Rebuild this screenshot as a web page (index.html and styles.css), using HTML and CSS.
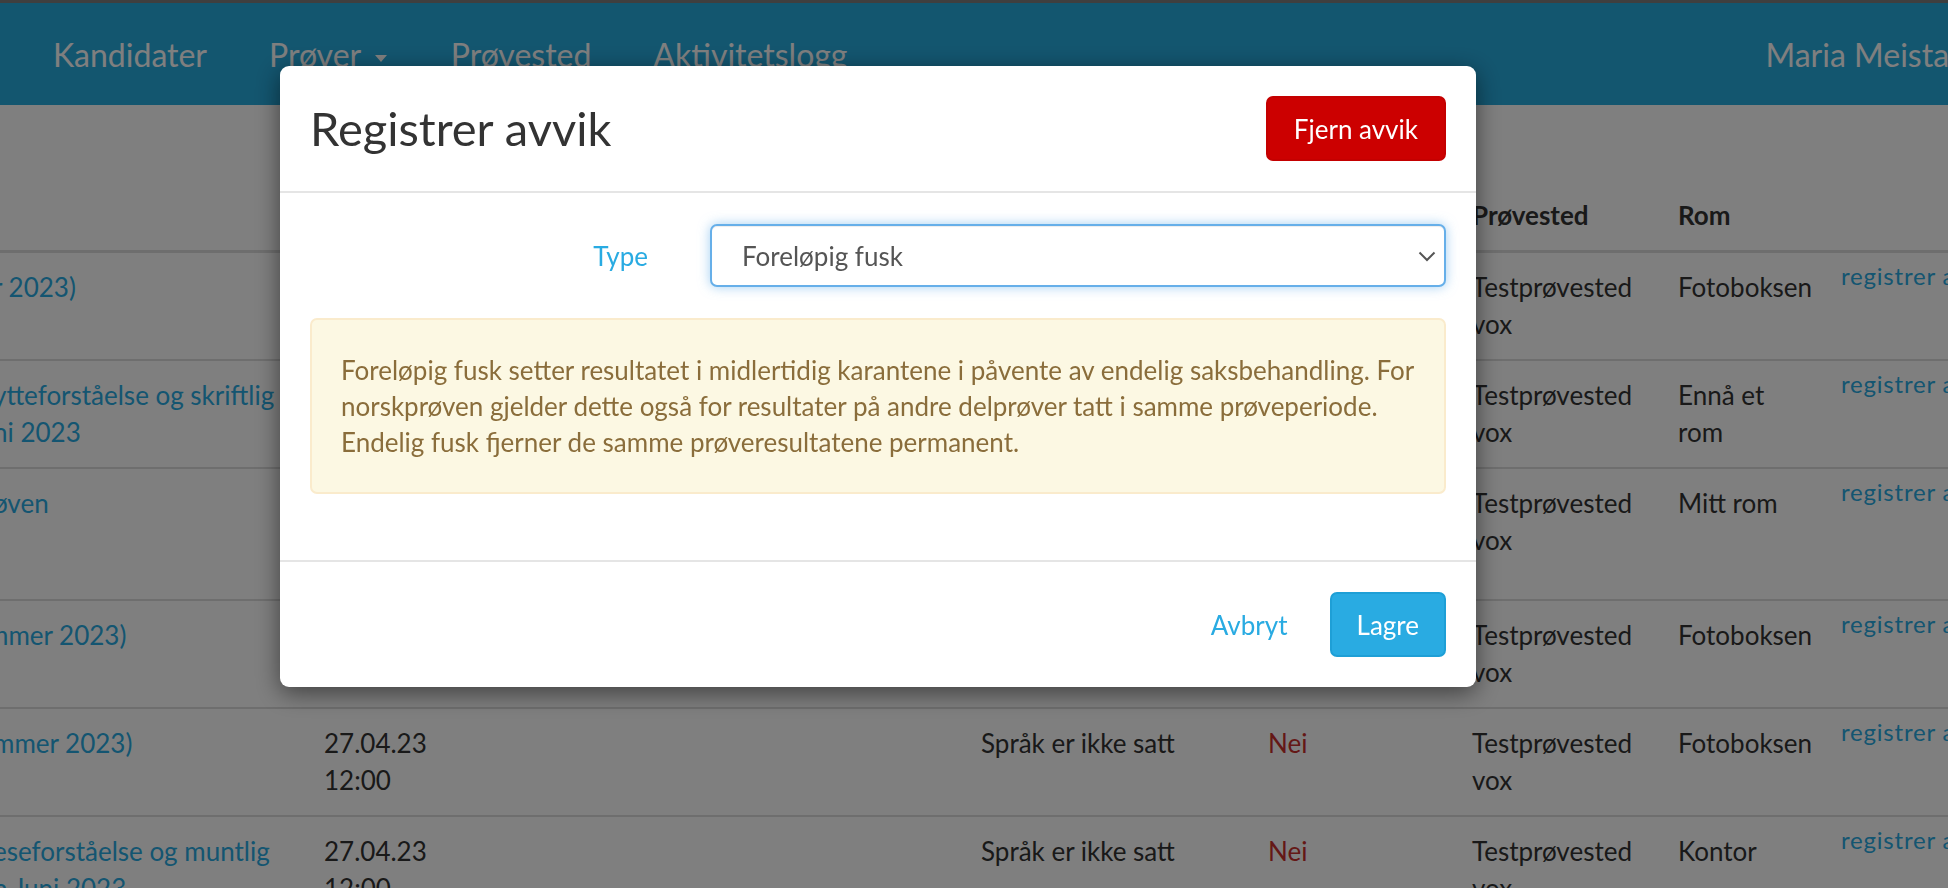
FILE: index.html
```html
<!DOCTYPE html>
<html lang="no">
<head>
  <meta charset="UTF-8">
  <meta name="viewport" content="width=device-width, initial-scale=1.0">
  <title>Registrer avvik</title>
  <link rel="stylesheet" href="styles.css">
</head>
<body>
  <div class="topstripe"></div>
  <nav class="navbar">
    <ul class="navbar-nav">
      <li><a href="#">Kandidater</a></li>
      <li><a href="#">Prøver <span class="caret"></span></a></li>
      <li><a href="#">Prøvested</a></li>
      <li><a href="#">Aktivitetslogg</a></li>
    </ul>
    <div class="navbar-user">Maria Meistad</div>
  </nav>

  <div class="content">
    <table class="oversikt">
      <colgroup>
        <col class="c-prove">
        <col class="c-tid">
        <col class="c-sprak">
        <col class="c-mott">
        <col class="c-sted">
        <col class="c-rom">
        <col class="c-handling">
      </colgroup>
      <thead>
        <tr>
          <th></th>
          <th>Tidspunkt</th>
          <th>Språk</th>
          <th>Møtt</th>
          <th>Prøvested</th>
          <th>Rom</th>
          <th></th>
        </tr>
      </thead>
      <tbody>
        <tr>
          <td><a href="#">r 2023)</a></td>
          <td>27.04.23<br>12:00</td>
          <td>Språk er ikke satt</td>
          <td class="nei">Nei</td>
          <td>Testprøvested<br>vox</td>
          <td>Fotoboksen</td>
          <td class="handling"><a href="#">registrer avvik</a></td>
        </tr>
        <tr>
          <td><a href="#">ytteforståelse og skriftlig<br>ni 2023</a></td>
          <td>27.04.23<br>12:00</td>
          <td>Språk er ikke satt</td>
          <td class="nei">Nei</td>
          <td>Testprøvested<br>vox</td>
          <td>Ennå et<br>rom</td>
          <td class="handling"><a href="#">registrer avvik</a></td>
        </tr>
        <tr>
          <td><a href="#">øven</a></td>
          <td><div class="tid-lang">27.04.23<br>12:00</div></td>
          <td>Språk er ikke satt</td>
          <td class="nei">Nei</td>
          <td>Testprøvested<br>vox</td>
          <td>Mitt rom</td>
          <td class="handling"><a href="#">registrer avvik</a></td>
        </tr>
        <tr>
          <td class="forskjov"><a href="#">mmer 2023)</a></td>
          <td>27.04.23<br>12:00</td>
          <td>Språk er ikke satt</td>
          <td class="nei">Nei</td>
          <td>Testprøvested<br>vox</td>
          <td>Fotoboksen</td>
          <td class="handling"><a href="#">registrer avvik</a></td>
        </tr>
        <tr>
          <td><a href="#">mmer 2023)</a></td>
          <td>27.04.23<br>12:00</td>
          <td>Språk er ikke satt</td>
          <td class="nei">Nei</td>
          <td>Testprøvested<br>vox</td>
          <td>Fotoboksen</td>
          <td class="handling"><a href="#">registrer avvik</a></td>
        </tr>
        <tr>
          <td><a href="#">eseforståelse og muntlig<br>n Juni 2023</a></td>
          <td>27.04.23<br>12:00</td>
          <td>Språk er ikke satt</td>
          <td class="nei">Nei</td>
          <td>Testprøvested<br>vox</td>
          <td>Kontor</td>
          <td class="handling"><a href="#">registrer avvik</a></td>
        </tr>
      </tbody>
    </table>
  </div>

  <div class="modal">
    <div class="modal-dialog">
      <div class="modal-header">
        <h4 class="modal-title">Registrer avvik</h4>
        <button class="btn btn-danger">Fjern avvik</button>
      </div>
      <div class="modal-body">
        <div class="form-row">
          <label for="type">Type</label>
          <div class="select-wrap">
            <select id="type" class="form-control">
              <option>Foreløpig fusk</option>
              <option>Endelig fusk</option>
            </select>
            <svg class="chevron" width="18" height="11" viewBox="0 0 18 11"><path d="M1.5 1.5 L9 9 L16.5 1.5" fill="none" stroke="#555" stroke-width="2"/></svg>
          </div>
        </div>
        <div class="alert">
          Foreløpig fusk setter resultatet i midlertidig karantene i påvente av endelig saksbehandling. For<br>
          norskprøven gjelder dette også for resultater på andre delprøver tatt i samme prøveperiode.<br>
          Endelig fusk fjerner de samme prøveresultatene permanent.
        </div>
      </div>
      <div class="modal-footer">
        <button class="btn btn-link">Avbryt</button>
        <button class="btn btn-primary">Lagre</button>
      </div>
    </div>
  </div>
</body>
</html>
```

FILE: styles.css
```css
body {
  margin: 0;
  font-family: Lato, "Open Sans", sans-serif;
  color: #333;
  background: #fff;
  overflow: hidden;
}
.topstripe {
  height: 3px;
  background: #7f7f7f;
}
.navbar {
  height: 102px;
  background: #27acdf;
  display: flex;
  align-items: center;
  white-space: nowrap;
}
.navbar-nav {
  display: flex;
  list-style: none;
  margin: 0;
  padding: 0 0 0 22px;
}
.navbar-nav a {
  display: block;
  padding: 0 31px;
  color: #fff;
  font-size: 32px;
  text-decoration: none;
}
.caret {
  display: inline-block;
  border-top: 7px solid #fff;
  border-left: 6px solid transparent;
  border-right: 6px solid transparent;
  vertical-align: middle;
  margin-left: 6px;
  margin-right: 2px;
}
.navbar-user {
  margin-left: auto;
  margin-right: -19px;
  color: #fff;
  font-size: 32px;
}

.content {
  padding-top: 76px;
}
.oversikt {
  margin-left: -22px;
  width: 2022px;
  border-collapse: collapse;
  table-layout: fixed;
  font-size: 26px;
  line-height: 37px;
}
.c-prove { width: 331px; }
.c-tid { width: 657px; }
.c-sprak { width: 287px; }
.c-mott { width: 204px; }
.c-sted { width: 206px; }
.c-rom { width: 163px; }
.c-handling { width: 174px; }
.oversikt th, .oversikt td {
  padding: 16px 15px;
  text-align: left;
  vertical-align: top;
  white-space: nowrap;
}
.oversikt th {
  font-weight: 700;
  border-bottom: 3px solid #ddd;
}
.oversikt td {
  border-top: 2px solid #ddd;
}
.oversikt a {
  color: #29abe2;
  text-decoration: none;
}
.oversikt .forskjov {
  text-indent: -6px;
}
.oversikt .nei {
  color: #c9302c;
}
.oversikt .handling {
  padding-top: 4px;
  font-size: 24px;
  letter-spacing: 0.8px;
}
.tid-lang {
  min-height: 98px;
}

.modal {
  position: fixed;
  top: 0;
  left: 0;
  right: 0;
  bottom: 0;
  background: rgba(0, 0, 0, 0.5);
}
.modal-dialog {
  width: 1196px;
  margin: 66px 0 0 280px;
  background: #fff;
  border-radius: 9px;
  box-shadow: 0 6px 24px rgba(0, 0, 0, 0.5);
}
.modal-header {
  display: flex;
  justify-content: space-between;
  align-items: center;
  padding: 30px;
  border-bottom: 2px solid #e5e5e5;
}
.modal-title {
  margin: 0;
  font-size: 47px;
  font-weight: 400;
  line-height: 1;
  color: #333;
}
.btn {
  font-family: Lato, "Open Sans", sans-serif;
  font-size: 26px;
  height: 65px;
  padding: 0 26px;
  border-radius: 7px;
  border: 2px solid transparent;
  cursor: pointer;
}
.btn-danger {
  background: #cc0000;
  border-color: #c40000;
  color: #fff;
}
.btn-primary {
  background: #29abe2;
  border-color: #1e9fd6;
  color: #fff;
  padding: 0 25px;
}
.btn-link {
  background: none;
  color: #29abe2;
  padding: 0;
}
.modal-body {
  padding: 31px 30px 30px;
}
.form-row {
  display: grid;
  grid-template-columns: 338px 1fr;
  column-gap: 62px;
  align-items: center;
}
.form-row label {
  text-align: right;
  font-size: 26px;
  color: #29abe2;
}
.select-wrap {
  position: relative;
}
.form-control {
  display: block;
  width: 100%;
  height: 63px;
  padding: 0 50px 0 30px;
  font-family: Lato, "Open Sans", sans-serif;
  font-size: 26px;
  color: #555;
  background: #fff;
  border: 2px solid #66afe9;
  border-radius: 7px;
  box-shadow: inset 0 1px 1px rgba(0, 0, 0, 0.075), 0 0 12px rgba(102, 175, 233, 0.6);
  appearance: none;
  -webkit-appearance: none;
  outline: none;
}
.chevron {
  position: absolute;
  right: 10px;
  top: 27px;
}
.alert {
  margin: 31px 0 36px;
  padding: 32px 33px 32px 29px;
  background: #fcf8e3;
  border: 2px solid #faebcc;
  border-radius: 7px;
  color: #8a6d3b;
  font-size: 26px;
  line-height: 36px;
  white-space: nowrap;
}
.modal-footer {
  display: flex;
  justify-content: flex-end;
  align-items: center;
  gap: 40px;
  padding: 30px;
  border-top: 2px solid #e5e5e5;
}
```
